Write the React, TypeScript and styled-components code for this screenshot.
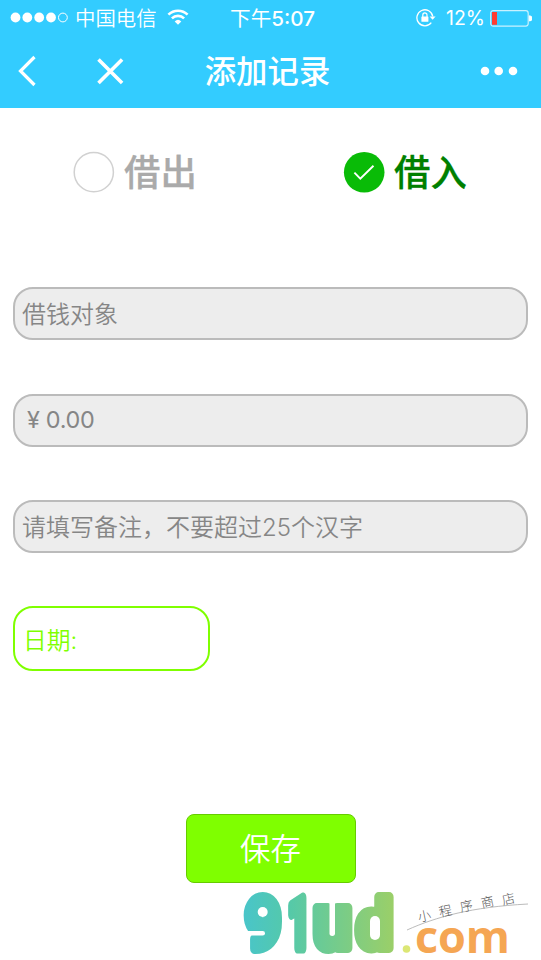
import { useState, type FormEvent } from 'react'
import styled, { createGlobalStyle } from 'styled-components'

const GlobalStyle = createGlobalStyle`
  * { box-sizing: border-box; }
  body {
    margin: 0; background: #fff;
    font-family: Inter, 'Noto Sans CJK SC', sans-serif;
  }
`
const Page = styled.div`
  width: 541px; height: 960px; overflow: hidden;
  display: flex; flex-direction: column;
`
const Header = styled.header`
  flex: none; height: 108px; background: #33ccff; color: #fff;
`
const StatusBar = styled.div`
  display: grid; grid-template-columns: 1fr auto 1fr; align-items: center;
  height: 35px; padding: 0 9px 0 10px; font-size: 20.4px; line-height: 34px;
`
const StatusGroup = styled.div<{ $end?: boolean }>`
  display: flex; align-items: center;
  justify-content: ${({ $end }) => ($end ? 'flex-end' : 'flex-start')};
`
const Carrier = styled.span`margin: 2px 10px 0 6px; font-weight: 350;`
const Clock = styled.span`
  padding: 1px 0 0 3px; font-size: 20.6px; font-weight: 500;
`
const ClockPeriod = styled.span`font-weight: 400;`
const Percent = styled.span`margin: 0 5px 0 10px; font-size: 19.5px; font-weight: 400;`
const NavBar = styled.nav`
  display: grid; grid-template-columns: 1fr auto 1fr; align-items: center;
  height: 72px; padding: 0 23px 0 17px;
`
const NavActions = styled.div<{ $end?: boolean }>`
  display: flex; gap: 58px;
  justify-content: ${({ $end }) => ($end ? 'flex-end' : 'flex-start')};
`
const IconButton = styled.button`
  display: flex; padding: 0; border: none; background: none; color: #fff; cursor: pointer;
`
const Title = styled.h1`
  margin: 2px 0 0; font-size: 31.4px; font-weight: 500; line-height: 70px;
`
const Form = styled.form`display: flex; flex-direction: column; padding: 0 13px;`
const Options = styled.div`
  display: grid; grid-template-columns: 270px 1fr; height: 179px; padding: 37px 0 0 60px;
`
const Option = styled.button<{ $active: boolean }>`
  display: flex; align-items: center; gap: 9px; height: 54px; padding: 0;
  border: none; background: none; cursor: pointer;
  font-family: inherit; font-size: 36.4px; font-weight: 500; line-height: 54px;
  color: ${({ $active }) => ($active ? '#008000' : '#aaa')};
  -webkit-text-stroke: 0.3px currentColor;
`
const OptionLabel = styled.span`padding-top: 2px;`
const Input = styled.input`
  display: block; width: 515px; height: 53px; margin-bottom: 53.5px; padding: 1px 8px 0 7px;
  border: 2px solid #bbb; border-radius: 20px; background: #ededed; outline: none;
  font-family: inherit; font-size: 24px; color: #333;
  &::placeholder { color: #868686; opacity: 1; font-weight: 350; }
`
const MoneyInput = styled(Input)`
  padding: 0 8px 1px 12px;
  &::placeholder { font-size: 23.4px; font-weight: 400; letter-spacing: -0.3px; }
`
const DateField = styled.button`
  width: 197px; height: 65px; margin-top: -1px; padding: 0 8px; text-align: left;
  border: 2px solid #7fff00; border-radius: 20px; background: #fff;
  font-family: inherit; font-size: 23.8px; font-weight: 350; color: #7fff00; cursor: pointer;
`
const SaveButton = styled.button`
  align-self: center; width: 170px; height: 69px; margin: 143px 0 0; padding: 0 0 2px;
  border: 1px solid #66cc00; border-radius: 8px; background: #7fff00; color: #fff;
  font-family: inherit; font-size: 30.4px; font-weight: 350; cursor: pointer;
`
const Footer = styled.footer`
  display: flex; justify-content: flex-end; margin-top: 4px; padding-right: 9px;
`
const LogoSvg = styled.svg`overflow: visible;`
const BrandLetter = styled.text`font-family: Roboto, sans-serif; font-weight: 900;`
const BrandSuffix = styled.text`font-family: 'Open Sans', sans-serif; font-weight: 700;`
const NoteText = styled.text`
  font-family: 'Noto Sans CJK SC', sans-serif; font-size: 13px; font-weight: 300; fill: #555;
`

function Signal() {
  return (
    <svg width="59" height="12" viewBox="0 0 59 12" fill="#fff">
      {[5.5, 17.3, 29.2, 41].map((cx) => <circle key={cx} cx={cx} cy="5.5" r="4.9" />)}
      <circle cx="52.9" cy="5.5" r="4.4" fill="none" stroke="#fff" strokeWidth="1" />
    </svg>
  )
}

function Wifi() {
  return (
    <svg width="22" height="18" viewBox="0 0 22 18" fill="none" stroke="#fff" strokeWidth="2.6">
      <path d="M1.4 5.7a13.6 13.6 0 0 1 19.2 0" />
      <path d="M4.9 9.4a8.6 8.6 0 0 1 12.2 0" />
      <path d="M11 15.8 7.7 12.4a4.8 4.8 0 0 1 6.6 0z" fill="#fff" stroke="none" />
    </svg>
  )
}

function RotationLock() {
  return (
    <svg width="20" height="18" viewBox="0 0 20 18" fill="none" stroke="#fff">
      <path d="M15.3 13.6A8 8 0 1 1 16.8 7.5" strokeWidth="1.3" />
      <path d="M13.6 7.5h6l-3 3.3z" fill="#fff" stroke="none" />
      <rect x="5.4" y="7.4" width="7" height="5.4" rx="0.6" fill="#fff" stroke="none" />
      <path d="M6.8 8V6a2.1 2.1 0 0 1 4.2 0v2" strokeWidth="1.2" />
    </svg>
  )
}

function Battery() {
  return (
    <svg width="42" height="17" viewBox="0 0 42 17">
      <rect x="0.7" y="0.7" width="37.5" height="15.4" rx="2.5" fill="none" stroke="#c9f1ff" strokeWidth="1.2" />
      <path d="M2 2h5v12.8H2z" fill="#ff3b30" />
      <path d="M39.4 5.8a2.6 2.6 0 0 1 0 5.2z" fill="#fff" stroke="#fff" />
    </svg>
  )
}

function RadioMark({ active }: { active: boolean }) {
  return (
    <svg width="42" height="42" viewBox="0 0 42 42" fill="none">
      {active
        ? <><circle cx="21.2" cy="21.3" r="20.3" fill="#09bb07" /><path d="m11.4 21.7 5.9 5.9 13.2-12.8" stroke="#fff" strokeWidth="1.9" /></>
        : <circle cx="20.8" cy="21.2" r="19.6" stroke="#d1d1d1" strokeWidth="1.5" />}
    </svg>
  )
}

const LETTERS = [
  { char: '9', x: 3, width: 34, size: 70, stroke: 11 },
  { char: '1', x: 45, width: 22, size: 71, stroke: 11 },
  { char: 'u', x: 71, width: 37, size: 76, stroke: 10 },
  { char: 'd', x: 114, width: 35, size: 69, stroke: 10 },
]
const NOTE = [
  { char: '小', x: 176, y: 35 },
  { char: '程', x: 197, y: 30 },
  { char: '序', x: 218, y: 25 },
  { char: '商', x: 239, y: 21 },
  { char: '店', x: 260, y: 18 },
]

function Logo() {
  return (
    <LogoSvg width="289" height="72" viewBox="0 0 289 72">
      <defs>
        <linearGradient id="brand" gradientUnits="userSpaceOnUse" x1="1" y1="0" x2="151" y2="0">
          <stop offset="0" stopColor="#49c5c9" />
          <stop offset="0.3" stopColor="#55c9a9" />
          <stop offset="1" stopColor="#9bcf68" />
        </linearGradient>
      </defs>
      {LETTERS.map(({ char, x, width, size, stroke }) => (
        <BrandLetter
          key={char} x={x} y="61" fontSize={size} textLength={width} lengthAdjust="spacingAndGlyphs"
          fill="url(#brand)" stroke="url(#brand)" strokeWidth={stroke} strokeLinejoin="round"
        >
          {char}
        </BrandLetter>
      ))}
      {/* rounded counters punched out of the heavy letters */}
      <g fill="#fff">
        <circle cx="19.7" cy="25" r="5" />
        <rect x="-2" y="44" width="24" height="4.6" rx="2.3" />
        <rect x="86.5" y="12" width="5.5" height="37" rx="2.7" />
        <rect x="127" y="29" width="10" height="24" rx="5" />
      </g>
      <circle cx="163.5" cy="62" r="3.8" fill="#dce775" />
      <BrandSuffix x="172" y="66" fontSize="45" textLength="95" fill="#f5a653">com</BrandSuffix>
      <path d="M164 43C193 30 228 20 285 17" fill="none" stroke="#aaa" strokeWidth="0.8" />
      {NOTE.map(({ char, x, y }) => (
        <NoteText key={char} transform={`translate(${x} ${y}) rotate(-12)`}>{char}</NoteText>
      ))}
    </LogoSvg>
  )
}

export default function App() {
  const [type, setType] = useState<'out' | 'in'>('in')
  const [target, setTarget] = useState('')
  const [amount, setAmount] = useState('')
  const [remark, setRemark] = useState('')

  function handleSubmit(e: FormEvent) {
    e.preventDefault()
  }

  return (
    <Page>
      <GlobalStyle />
      <Header>
        <StatusBar>
          <StatusGroup><Signal /><Carrier>中国电信</Carrier><Wifi /></StatusGroup>
          <Clock><ClockPeriod>下午</ClockPeriod>5:07</Clock>
          <StatusGroup $end><RotationLock /><Percent>12%</Percent><Battery /></StatusGroup>
        </StatusBar>
        <NavBar>
          <NavActions>
            <IconButton aria-label="返回">
              <svg width="21" height="32" viewBox="0 0 21 32" fill="none" stroke="#fff" strokeWidth="3.2">
                <path d="M17.5 2 3.5 16l14 14" />
              </svg>
            </IconButton>
            <IconButton aria-label="关闭">
              <svg width="30" height="32" viewBox="0 0 30 32" fill="none" stroke="#fff" strokeWidth="3.6">
                <path d="m2.5 4.5 23.6 23.6m0-23.6L2.5 28.1" />
              </svg>
            </IconButton>
          </NavActions>
          <Title>添加记录</Title>
          <NavActions $end>
            <IconButton aria-label="更多">
              <svg width="40" height="10" viewBox="0 0 40 10" fill="#fff">
                <circle cx="7" cy="5" r="4.3" /><circle cx="20.7" cy="5" r="4.3" /><circle cx="35" cy="5" r="4.3" />
              </svg>
            </IconButton>
          </NavActions>
        </NavBar>
      </Header>
      <Form onSubmit={handleSubmit}>
        <Options>
          <Option type="button" $active={type === 'out'} onClick={() => setType('out')}>
            <RadioMark active={type === 'out'} /><OptionLabel>借出</OptionLabel>
          </Option>
          <Option type="button" $active={type === 'in'} onClick={() => setType('in')}>
            <RadioMark active={type === 'in'} /><OptionLabel>借入</OptionLabel>
          </Option>
        </Options>
        <Input value={target} onChange={(e) => setTarget(e.target.value)} placeholder="借钱对象" />
        <MoneyInput value={amount} onChange={(e) => setAmount(e.target.value)} placeholder="¥ 0.00" />
        <Input value={remark} onChange={(e) => setRemark(e.target.value)} placeholder="请填写备注，不要超过25个汉字" />
        <DateField type="button">日期:</DateField>
        <SaveButton type="submit">保存</SaveButton>
      </Form>
      <Footer><Logo /></Footer>
    </Page>
  )
}
